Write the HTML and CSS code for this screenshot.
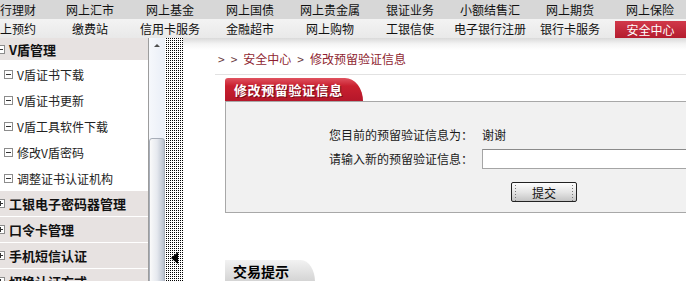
FILE: index.html
```html
<!DOCTYPE html>
<html lang="zh-CN">
<head>
<meta charset="utf-8">
<title>安全中心 - 修改预留验证信息</title>
<link rel="stylesheet" href="styles.css">
</head>
<body>
<div class="page">
  <header class="topnav">
    <nav class="navrow row1">
      <a class="lead">行理财</a><a>网上汇市</a><a>网上基金</a><a>网上国债</a><a>网上贵金属</a><a>银证业务</a><a>小额结售汇</a><a>网上期货</a><a>网上保险</a>
    </nav>
    <nav class="navrow row2">
      <a class="lead">上预约</a><a>缴费站</a><a>信用卡服务</a><a>金融超市</a><a>网上购物</a><a>工银信使</a><a>电子银行注册</a><a>银行卡服务</a><a class="active"><span>安全中心</span></a>
    </nav>
  </header>
  <div class="body">
    <aside class="sidebar">
      <div class="group first"><i class="box"></i>V盾管理</div>
      <ul class="items">
        <li><i class="box"></i>V盾证书下载</li>
        <li><i class="box"></i>V盾证书更新</li>
        <li><i class="box"></i>V盾工具软件下载</li>
        <li><i class="box"></i>修改V盾密码</li>
        <li><i class="box"></i>调整证书认证机构</li>
      </ul>
      <div class="group"><i class="box plus"></i>工银电子密码器管理</div>
      <div class="group"><i class="box plus"></i>口令卡管理</div>
      <div class="group"><i class="box plus"></i>手机短信认证</div>
      <div class="group"><i class="box plus"></i>切换认证方式</div>
    </aside>
    <div class="scrollbar"><span class="up"></span><span class="thumb"></span></div>
    <div class="splitter"><span class="collapse"></span></div>
    <main class="content">
      <div class="crumb"><span class="sep">&gt;</span><span class="sep">&gt;</span><span>安全中心</span><span class="sep">&gt;</span><span>修改预留验证信息</span></div>
      <section class="card">
        <h2 class="tab red">修改预留验证信息</h2>
        <div class="panel">
          <div class="form">
            <span class="label">您目前的预留验证信息为：</span><span class="value">谢谢</span>
            <span class="label">请输入新的预留验证信息：</span><input class="field" type="text">
          </div>
          <button class="submit" type="button">提交</button>
        </div>
      </section>
      <h2 class="tab gray">交易提示</h2>
    </main>
  </div>
</div>
</body>
</html>
```

FILE: styles.css
```css
* { box-sizing: border-box; }
html, body { margin: 0; padding: 0; }
body {
  width: 686px;
  height: 281px;
  overflow: hidden;
  background: #fff;
  font-family: "Noto Sans CJK SC", "Liberation Sans", sans-serif;
  font-size: 12px;
  color: #1a1a1a;
}
.page { display: flex; flex-direction: column; height: 281px; }

/* top navigation */
.topnav { flex: none; overflow: hidden; }
.navrow {
  display: flex;
  height: 19px;
  white-space: nowrap;
}
.navrow a {
  flex: none;
  width: 80px;
  text-align: center;
  line-height: 19px;
  font-size: 12px;
  color: #111;
}
.navrow a.lead { width: 50px; text-align: left; }
.row1 { background: #d7d7d7; }
.row2 { background: linear-gradient(#f3f3f3, #e9e9e9); }
.row2 a.active { width: 76px; }
.row2 a.active span {
  display: block;
  margin: 2px 0 0 5px;
  height: 17px;
  line-height: 17px;
  color: #fff;
  background: linear-gradient(#d1394a, #b41c2e);
}

/* body */
.body { flex: 1; display: flex; min-height: 0; }

.sidebar { flex: none; width: 148px; overflow: hidden; background: #fff; }
.group {
  display: flex;
  align-items: center;
  gap: 4px;
  height: 26px;
  background: #e7e2e1;
  border-bottom: 1px solid #fff;
  font-size: 13px;
  font-weight: bold;
  color: #111;
}
.group.first { height: 23px; }
.group .box { margin-left: -4px; }
.items { list-style: none; margin: 0; padding: 0; }
.items li {
  display: flex;
  align-items: center;
  gap: 4px;
  height: 26px;
  padding-left: 4px;
  font-size: 12px;
  color: #222;
}
.box {
  flex: none;
  position: relative;
  width: 9px;
  height: 9px;
  border: 1px solid #8c8c8c;
  background: #fff;
}
.box::before {
  content: "";
  position: absolute;
  left: 1px;
  top: 3px;
  width: 5px;
  height: 1px;
  background: #333;
}
.box.plus::after {
  content: "";
  position: absolute;
  left: 3px;
  top: 1px;
  width: 1px;
  height: 5px;
  background: #333;
}

.scrollbar {
  flex: none;
  position: relative;
  width: 17px;
  background: linear-gradient(90deg, #9c9c9c 0 1px, #f6f8fc 1px, #e9eef7);
}
.scrollbar .up {
  position: absolute;
  left: 6px;
  top: 6px;
  border-left: 3px solid transparent;
  border-right: 3px solid transparent;
  border-bottom: 3px solid #4d4d4d;
}
.scrollbar .thumb {
  position: absolute;
  left: 1px;
  right: 0;
  top: 100px;
  bottom: -4px;
  border: 1px solid #a7adb8;
  border-radius: 3px 3px 0 0;
  background: linear-gradient(90deg, #fafafa, #e6e9ef 50%, #b7c0cd);
}

.splitter {
  flex: none;
  position: relative;
  width: 18px;
  background-color: #fff;
  background-image: conic-gradient(#000 0 25%, transparent 0);
  background-size: 2px 2px;
}
.splitter .collapse {
  position: absolute;
  left: 6px;
  top: 214px;
  border-top: 6px solid transparent;
  border-bottom: 6px solid transparent;
  border-right: 7px solid #000;
}

.content {
  flex: 1;
  min-width: 0;
  overflow: hidden;
  padding-top: 12px;
  background: linear-gradient(#d9d9d9, #f4f4f4 6px, #fff 12px);
}
.crumb {
  display: flex;
  gap: 6px;
  margin-left: 32px;
  height: 25px;
  padding-left: 3px;
  line-height: 17px;
  font-size: 12px;
  color: #8f1f31;
  border-bottom: 1px solid #e2e2e2;
}
.crumb .sep { color: #6a3a40; }

.card { margin: 3px 0 0 42px; }
.tab {
  margin: 0;
  height: 23px;
  line-height: 23px;
  font-weight: bold;
}
.tab.red {
  width: 138px;
  padding-left: 9px;
  font-size: 13px;
  letter-spacing: 0.6px;
  color: #fff;
  text-shadow: 1px 1px 0 #7a0c18;
  background: linear-gradient(#e0525f, #c9202f 35%, #b5172a);
  border-radius: 3px 18px 0 0 / 3px 23px 0 0;
}
.panel {
  width: 520px;
  height: 112px;
  border: 1px solid #a8a8a8;
  border-right: 0;
  background: #f1f1f1;
  padding: 24px 0 0 103px;
}
.form {
  display: grid;
  grid-template-columns: 153px auto;
  grid-template-rows: 18px 20px;
  row-gap: 5px;
  align-items: center;
}
.label, .value { font-size: 12px; line-height: 18px; color: #1a1a1a; }
.field {
  width: 220px;
  height: 20px;
  margin: 0;
  border: 1px solid #a5a5a5;
  border-top-color: #8a8a8a;
  background: #fff;
}
.submit {
  display: block;
  margin: 13px 0 0 182px;
  width: 66px;
  height: 20px;
  padding: 0;
  font-family: inherit;
  font-size: 12px;
  color: #111;
  border: 1px solid #222;
  border-radius: 2px;
  background:
    radial-gradient(circle, #777 0.6px, transparent 0.8px) left 2px top 1px / 3px 3px repeat-y,
    radial-gradient(circle, #777 0.6px, transparent 0.8px) right 2px top 1px / 3px 3px repeat-y,
    linear-gradient(#fdfdfd, #e6e6e6 50%, #c4c4c4);
}
.tab.gray {
  margin: 47px 0 0 42px;
  width: 90px;
  height: 22px;
  line-height: 22px;
  padding-left: 8px;
  font-size: 14px;
  color: #000;
  background: linear-gradient(#f2f2f2, #d3d3d3);
  border-radius: 0 14px 0 0 / 0 22px 0 0;
}
```
